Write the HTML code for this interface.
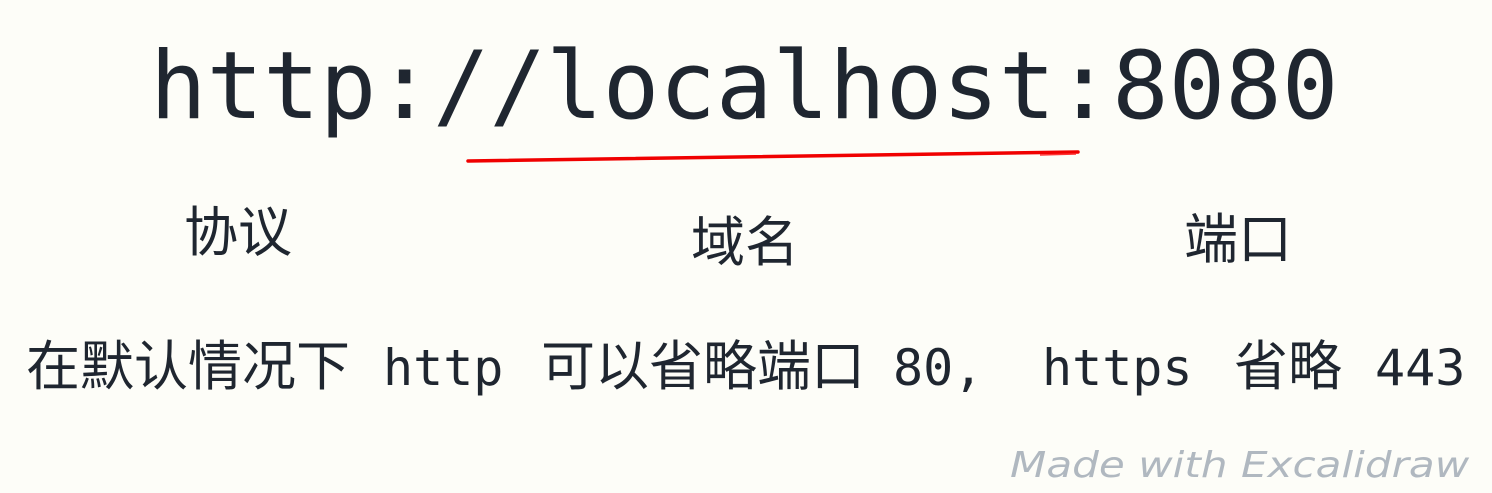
<!DOCTYPE html>
<html><head><meta charset="utf-8"><style>
html,body{margin:0;padding:0;}
body{width:1492px;height:493px;background:#fdfdf8;position:relative;overflow:hidden;color:#1f2630;}
.a{position:absolute;white-space:pre;line-height:1;}
.m{font-family:"DejaVu Sans Mono","Liberation Mono",monospace;}
.c{font-family:"Liberation Sans","Noto Sans CJK SC",sans-serif;}
</style></head><body>
<div class="a m" style="left:150px;top:40px;font-size:94px;line-height:94px;">http://localhost:8080</div>
<svg class="a" style="left:0;top:0" width="1492" height="493"><path d="M468 161 Q770 156 1078 152" stroke="#f00000" stroke-width="3.5" fill="none" stroke-linecap="round"/><path d="M1040 155 L1076 154" stroke="#f33" stroke-width="1.5" fill="none"/></svg>
<div class="a c" style="left:184px;top:206px;font-size:54px;">协议</div>
<div class="a c" style="left:691px;top:216px;font-size:54px;">域名</div>
<div class="a c" style="left:1184px;top:213px;font-size:54px;">端口</div>
<div class="a c" style="left:26px;top:340px;font-size:54px;">在默认情况下</div>
<div class="a m" style="left:383px;top:343px;font-size:50px;line-height:50px;">http</div>
<div class="a c" style="left:541px;top:340px;font-size:54px;">可以省略端口</div>
<div class="a m" style="left:893px;top:343px;font-size:50px;line-height:50px;">80,</div>
<div class="a m" style="left:1042px;top:343px;font-size:50px;line-height:50px;">https</div>
<div class="a c" style="left:1234px;top:340px;font-size:54px;">省略</div>
<div class="a m" style="left:1375px;top:343px;font-size:50px;line-height:50px;">443</div>
<div class="a" style="left:1010px;top:448px;font-size:36px;color:#b0b8c0;font-family:'Comic Sans MS','DejaVu Sans',cursive;font-style:italic;transform-origin:0 0;transform:scaleX(1.17);">Made with Excalidraw</div>
</body></html>
